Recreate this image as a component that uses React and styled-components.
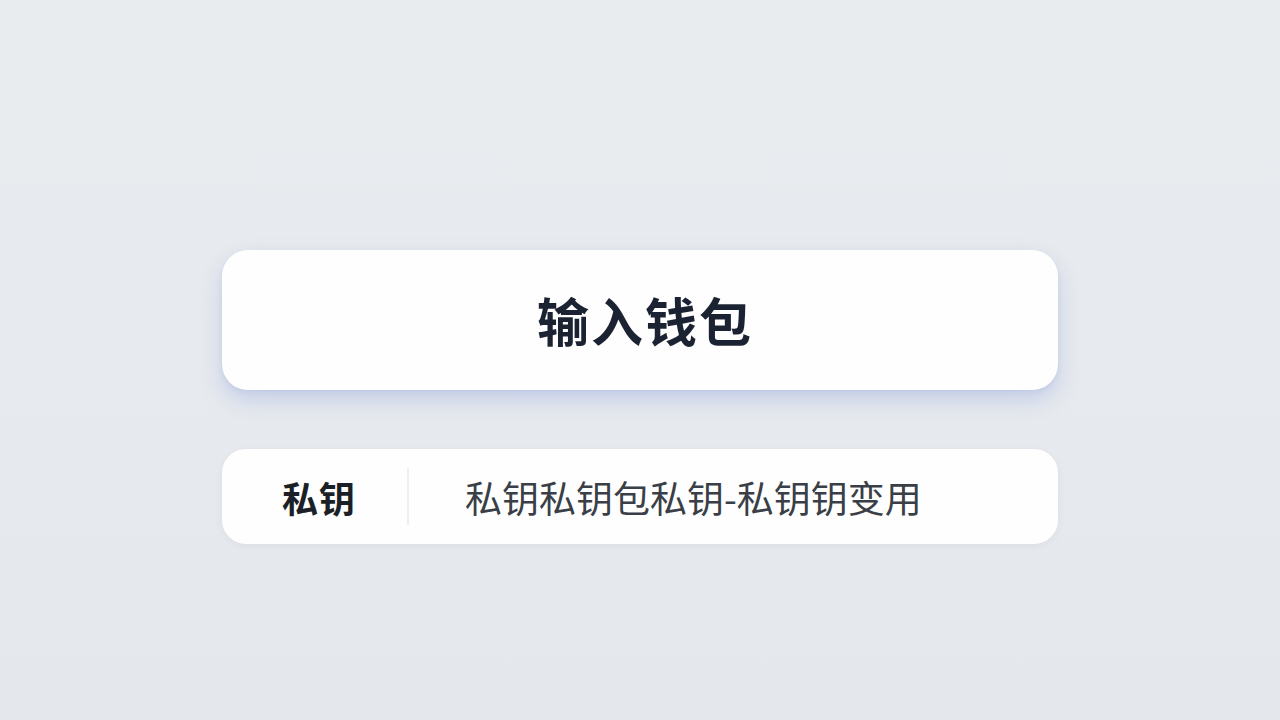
import React from 'react'
import styled, { createGlobalStyle } from 'styled-components';

const GlobalStyle = createGlobalStyle`
  html, body {
    margin: 0;
    padding: 0;
    background: #e7eaee;
  }
  body {
    font-family: "Noto Sans CJK SC", "Noto Sans", sans-serif;
  }
`;

const Page = styled.div`
  width: 1280px;
  height: 720px;
  display: flex;
  flex-direction: column;
  align-items: center;
  padding-top: 250px;
  box-sizing: border-box;
  gap: 59px;
  background: linear-gradient(180deg, #e9ecef 0%, #e7eaee 50%, #e4e8ec 100%);
`;

const TitleCard = styled.div`
  width: 836px;
  height: 140px;
  border-radius: 26px;
  background: #fefefe;
  display: flex;
  align-items: center;
  justify-content: center;
  box-shadow: 0 10px 22px rgba(125, 150, 220, 0.32), 0 2px 5px rgba(120, 140, 190, 0.12);
`;

const Title = styled.h1`
  margin: 0 0 0 10px;
  font-size: 52px;
  font-weight: 600;
  color: #1b2232;
  letter-spacing: 2px;
  line-height: 1;
`;

const FieldCard = styled.div`
  width: 836px;
  height: 95px;
  border-radius: 24px;
  background: #fefefe;
  display: flex;
  align-items: center;
  padding-left: 60px;
  box-sizing: border-box;
  box-shadow: 0 2px 6px rgba(140, 150, 170, 0.12);
`;

const FieldLabel = styled.span`
  font-size: 36px;
  font-weight: 600;
  color: #1b1f27;
  width: 73px;
  letter-spacing: 1px;
  white-space: nowrap;
`;

const Divider = styled.div`
  width: 2px;
  height: 57px;
  background: #eceef1;
  margin: 0 56px 0 52px;
`;

const FieldValue = styled.span`
  font-size: 37px;
  font-weight: 400;
  color: #3a3f47;
  white-space: nowrap;
`;

function App() {
  return (
    <Page>
      <GlobalStyle />
      <TitleCard>
        <Title>输入钱包</Title>
      </TitleCard>
      <FieldCard>
        <FieldLabel>私钥</FieldLabel>
        <Divider />
        <FieldValue>私钥私钥包私钥-私钥钥变用</FieldValue>
      </FieldCard>
    </Page>
  );
}

export default App;
